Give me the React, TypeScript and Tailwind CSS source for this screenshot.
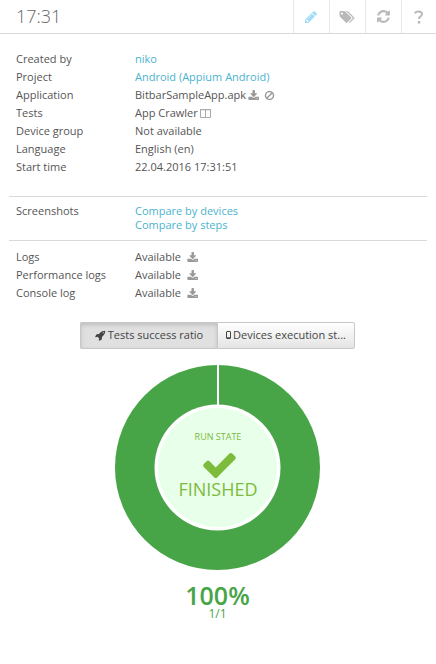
import type { ReactNode } from 'react';

const paths = {
  pencil:
    'M491 1536l91-91-235-235-91 91v107h128v128h107zm523-928q0-22-22-22-10 0-17 7l-542 542q-7 7-7 17 0 22 22 22 10 0 17-7l542-542q7-7 7-17zm-54-192l416 416-832 832h-416v-416zm683 96q0 53-37 90l-166 166-416-416 166-165q36-38 90-38 53 0 91 38l235 234q37 39 37 91z',
  tags:
    'M448 448q0-53-37.5-90.5t-90.5-37.5-90.5 37.5-37.5 90.5 37.5 90.5 90.5 37.5 90.5-37.5 37.5-90.5zm1067 576q0 53-37 90l-491 492q-39 37-91 37-53 0-90-37l-715-716q-38-37-64.5-101t-26.5-117v-416q0-52 38-90t90-38h416q53 0 117 26.5t102 64.5l715 714q37 39 37 91zm384 0q0 53-37 90l-491 492q-39 37-91 37-36 0-59-14t-53-45l470-470q37-37 37-90 0-52-37-91l-715-714q-38-38-102-64.5t-117-26.5h224q53 0 117 26.5t102 64.5l715 714q37 39 37 91z',
  refresh:
    'M1639 1056q0 5-1 7-64 268-268 434.5t-478 166.5q-146 0-282.5-55t-243.5-157l-129 129q-19 19-45 19t-45-19-19-45v-448q0-26 19-45t45-19h448q26 0 45 19t19 45-19 45l-137 137q71 66 161 102t187 36q134 0 250-65t186-179q11-17 53-117 8-23 30-23h192q13 0 22.5 9.5t9.5 22.5zm25-800v448q0 26-19 45t-45 19h-448q-26 0-45-19t-19-45 19-45l138-138q-148-137-349-137-134 0-250 65t-186 179q-11 17-53 117-8 23-30 23h-199q-13 0-22.5-9.5t-9.5-22.5v-7q65-268 270-434.5t480-166.5q146 0 284 55.5t245 156.5l130-129q19-19 45-19t45 19 19 45z',
  download:
    'M1344 1344q0-26-19-45t-45-19-45 19-19 45 19 45 45 19 45-19 19-45zm256 0q0-26-19-45t-45-19-45 19-19 45 19 45 45 19 45-19 19-45zm128-224v320q0 40-28 68t-68 28h-1472q-40 0-68-28t-28-68v-320q0-40 28-68t68-28h465l135 136q58 56 136 56t136-56l136-136h464q40 0 68 28t28 68zm-325-569q17 41-14 70l-448 448q-18 19-45 19t-45-19l-448-448q-31-29-14-70 17-39 59-39h256v-448q0-26 19-45t45-19h256q26 0 45 19t19 45v448h256q42 0 59 39z',
  ban:
    'M1440 893q0-161-87-295l-754 753q137 89 297 89 111 0 211.5-43.5t173.5-116.5 116-174.5 43-212.5zm-999 299l755-754q-135-91-300-91-148 0-273 73t-198 199-73 274q0 162 89 299zm1223-299q0 157-61 300t-163.5 246-245 164-298.5 61-298.5-61-245-164-163.5-246-61-300 61-299.5 163.5-245.5 245-164 298.5-61 298.5 61 245 164 163.5 245.5 61 299.5z',
  rocket:
    'M1440 448q0-40-28-68t-68-28-68 28-28 68 28 68 68 28 68-28 28-68zm224-288q0 249-75.5 430.5t-253.5 360.5q-81 80-195 176l-20 379q-2 16-16 26l-384 224q-7 4-16 4-12 0-23-9l-64-64q-13-14-8-32l85-276-281-281-276 85q-3 1-9 1-14 0-23-9l-64-64q-17-19-5-39l224-384q10-14 26-16l379-20q96-114 176-195 188-187 358-258t431-71q14 0 24 9.5t10 22.5z',
  check:
    'M1671 566q0 40-28 68l-724 724-136 136q-28 28-68 28t-68-28l-136-136-362-362q-28-28-28-68t28-68l136-136q28-28 68-28t68 28l294 295 656-657q28-28 68-28t68 28l136 136q28 28 28 68z',
};

function Icon({ name, className, viewBox = '0 0 1792 1792' }: { name: keyof typeof paths; className: string; viewBox?: string }) {
  return (
    <svg viewBox={viewBox} className={className} fill="currentColor" aria-hidden="true">
      <path d={paths[name]} />
    </svg>
  );
}

function ToolButton({ label, children }: { label: string; children: ReactNode }) {
  return (
    <button type="button" aria-label={label} className="flex w-9 items-center justify-center border-l border-[#e8e8e8] pr-px text-[#b9b9b9]">
      {children}
    </button>
  );
}

function Row({ label, children }: { label: string; children: ReactNode }) {
  return (
    <div className="flex">
      <dt className="w-[119px] shrink-0">{label}</dt>
      <dd className="flex min-w-0 flex-1 items-center">{children}</dd>
    </div>
  );
}

function DownloadButton({ label }: { label: string }) {
  return (
    <button type="button" aria-label={label} className="text-[#999]">
      <Icon name="download" viewBox="0 0 1728 1536" className="h-[10px] w-[11px]" />
    </button>
  );
}

function LogRow({ label }: { label: string }) {
  return (
    <Row label={label}>
      <span className="mr-[6px]">Available</span>
      <DownloadButton label={`Download ${label}`} />
    </Row>
  );
}

function Donut() {
  return (
    <div className="grid place-items-center">
      <svg viewBox="0 0 205 205" className="col-start-1 row-start-1 h-[205px] w-[205px]" aria-hidden="true">
        <circle cx="102.5" cy="102.5" r="102.5" fill="#48a547" />
        <rect x="102" y="0" width="2" height="42" fill="#fff" />
        <circle cx="102.5" cy="102.5" r="63" fill="#fff" />
        <circle cx="102.5" cy="102.5" r="59.5" fill="#e8ffe9" />
      </svg>
      <div className="col-start-1 row-start-1 flex flex-col items-center pl-px text-[#7cbb3c]">
        <span className="text-[9px] leading-3">RUN STATE</span>
        <Icon name="check" viewBox="121 334 1550 1188" className="mt-[10px] ml-1 h-[25px] w-[33px]" />
        <span className="pb-1 text-[18px] leading-[22px]">FINISHED</span>
      </div>
    </div>
  );
}

const link = 'text-[#4bb3ce]';

export default function App() {
  return (
    <main className="min-h-screen overflow-x-hidden bg-white font-['Open_Sans',sans-serif] text-[11px] leading-[18px] text-[#555]">
      <header className="-mr-px flex h-[34px] border-b border-[#d9d9d9]">
        <h1 className="flex flex-1 items-center pb-px pl-4 text-[18px] font-light text-[#666]">17:31</h1>
        <ToolButton label="Edit">
          <Icon name="pencil" className="h-[14px] w-[14px] text-[#9fdcf9]" />
        </ToolButton>
        <ToolButton label="Tags">
          <Icon name="tags" viewBox="0 128 1920 1536" className="h-3 w-4" />
        </ToolButton>
        <ToolButton label="Refresh">
          <Icon name="refresh" className="h-[15px] w-[15px]" />
        </ToolButton>
        <ToolButton label="Help">
          <svg viewBox="0 0 10 14" className="h-[14px] w-[10px]" fill="none" stroke="currentColor" strokeWidth="2" aria-hidden="true">
            <path d="M1 3.500Q1.500 1.500 4.500 1.500Q8 1.500 8 4Q8 5.500 6.500 6.500Q5 7.300 5 9" />
            <path d="M5 11v2.500" strokeWidth="2.500" />
          </svg>
        </ToolButton>
      </header>

      <div className="px-[9px] pt-4">
        <dl className="px-[7px] pb-5">
          <Row label="Created by">
            <a href="#user" className={link}>niko</a>
          </Row>
          <Row label="Project">
            <a href="#project" className={link}>Android (Appium Android)</a>
          </Row>
          <Row label="Application">
            <span className="mr-[2px]">BitbarSampleApp.apk</span>
            <DownloadButton label="Download application" />
            <button type="button" aria-label="Block application" className="ml-[5px] text-[#999]">
              <Icon name="ban" className="h-[11px] w-[11px]" />
            </button>
          </Row>
          <Row label="Tests">
            <span className="mr-[2px]">App Crawler</span>
            <svg viewBox="0 0 11 9" className="h-[9px] w-[11px]" fill="none" stroke="#aaa" aria-hidden="true">
              <path d="M.5 .5h10v8h-10zM5.500 .5v8" />
              <path d="M0 .5h11" strokeWidth="1.500" />
            </svg>
          </Row>
          <Row label="Device group">Not available</Row>
          <Row label="Language">English (en)</Row>
          <Row label="Start time">22.04.2016 17:31:51</Row>
        </dl>

        <dl className="border-t border-[#d9d9d9] px-[7px] pt-[7px] pb-2 leading-[14px]">
          <Row label="Screenshots">
            <span className="flex flex-col">
              <a href="#devices" className={link}>Compare by devices</a>
              <a href="#steps" className={link}>Compare by steps</a>
            </span>
          </Row>
        </dl>

        <dl className="border-t border-[#d9d9d9] px-[7px] pt-[7px]">
          <LogRow label="Logs" />
          <LogRow label="Performance logs" />
          <LogRow label="Console log" />
        </dl>
      </div>

      <div className="mt-5 flex justify-center pr-px text-[#444]">
        <button
          type="button"
          aria-pressed="true"
          className="flex h-[27px] w-[137px] items-center justify-center gap-[2px] rounded-l-[2px] border border-r-0 border-[#c8c8c8] bg-[#e0e0e0] pb-px shadow-[inset_0_2px_4px_rgba(0,0,0,0.15)]"
        >
          <Icon name="rocket" className="h-[11px] w-[11px]" />
          Tests success ratio
        </button>
        <button
          type="button"
          aria-pressed="false"
          className="flex h-[27px] w-[138px] items-center justify-center gap-[2px] rounded-r-[2px] border border-[#c8c8c8] bg-gradient-to-b from-white to-[#e4e4e4] pb-px"
        >
          <svg viewBox="0 0 5 8" className="h-2 w-[5px]" fill="none" stroke="currentColor" aria-hidden="true">
            <rect x=".5" y=".5" width="4" height="7" rx=".5" />
            <path d="M1 6.800h3" />
          </svg>
          Devices execution st...
        </button>
      </div>

      <section aria-label="Tests success ratio" className="mt-4 flex flex-col items-center pr-px text-[#48a547]">
        <Donut />
        <strong className="mt-3 text-[25px] leading-[26px] font-semibold">100%</strong>
        <span className="text-[12px] leading-3">1/1</span>
      </section>
    </main>
  );
}
